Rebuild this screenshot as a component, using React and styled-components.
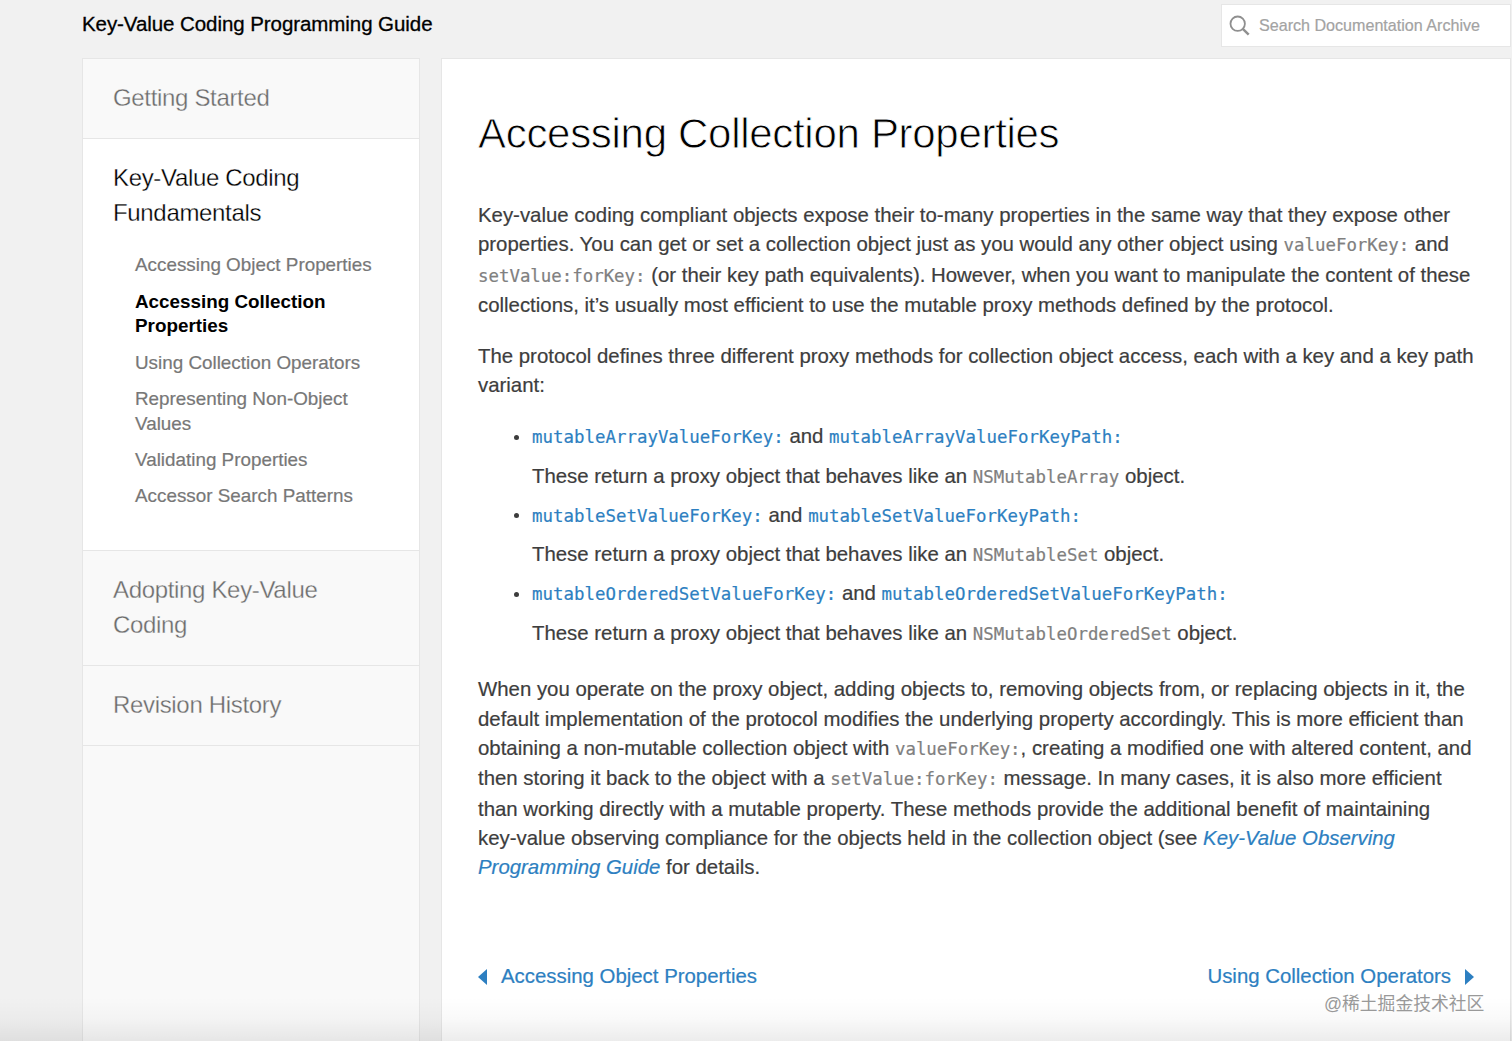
import React from 'react';
import styled, { createGlobalStyle } from 'styled-components';

const GlobalStyle = createGlobalStyle`
  * {
    box-sizing: border-box;
  }

  body {
    margin: 0;
    background: #f1f1f1;
    font-family: 'Liberation Sans', Arial, sans-serif;
    overflow: hidden;
  }

  ul {
    list-style: none;
    margin: 0;
    padding: 0;
  }

  a {
    color: inherit;
    text-decoration: none;
  }
`;

const Page = styled.div`
  display: flex;
  flex-direction: column;
  height: 1041px;
  padding: 0 1px 0 82px;
`;

const TopBar = styled.header`
  display: flex;
  flex: none;
  justify-content: space-between;
  height: 58px;
`;

const GuideTitle = styled.div`
  padding-top: 12px;
  font-size: 20.5px;
  line-height: 24px;
  letter-spacing: -0.07px;
  color: #000;
  white-space: nowrap;
  -webkit-text-stroke: 0.3px currentColor;
`;

const SearchBox = styled.label`
  display: flex;
  align-items: center;
  width: 290px;
  height: 43px;
  margin-top: 4px;
  padding-left: 7px;
  border: 1px solid #e6e6e6;
  background: #fff;

  input {
    width: 240px;
    margin-left: 9px;
    padding: 0 0 2px;
    border: 0;
    outline: 0;
    font: 16.1px/20px 'Liberation Sans', Arial, sans-serif;
    background: none;
    -webkit-text-stroke: 0.2px #a3a3a3;
  }

  input::placeholder {
    color: #a3a3a3;
    opacity: 1;
  }
`;

const Columns = styled.div`
  display: flex;
  flex: 1;
  gap: 21px;
  min-height: 0;
`;

const Sidebar = styled.nav`
  flex: none;
  width: 338px;
  border: 1px solid #e6e6e6;
  border-bottom: 0;
  background: #f9f9f9;
`;

const Chapter = styled.div`
  padding: 21px 30px ${(p) => (p.$active ? '34.6px' : '23px')};
  border-bottom: 1px solid #e6e6e6;
  background: ${(p) => (p.$active ? '#fff' : '#f9f9f9')};
`;

const ChapterTitle = styled.div`
  font-size: 24px;
  line-height: 35px;
  letter-spacing: -0.33px;
  color: ${(p) => (p.$active ? '#000' : '#6c6c6c')};
  -webkit-text-stroke: 0.3px ${(p) => (p.$active ? '#fff' : '#f9f9f9')};
`;

const Sections = styled.ul`
  display: flex;
  flex-direction: column;
  gap: 11.6px;
  padding: 23.4px 0 6px 22px;
`;

const Section = styled.li`
  font-size: 18.85px;
  line-height: 24.7px;
  font-weight: ${(p) => (p.$current ? 'bold' : 'normal')};
  color: ${(p) => (p.$current ? '#000' : '#777')};
  -webkit-text-stroke: ${(p) => (p.$current ? 0 : '0.2px')} currentColor;
`;

const Article = styled.main`
  flex: 1;
  padding: 45px 36px 0;
  border: 1px solid #e6e6e6;
  border-bottom: 0;
  background: #fff;
  color: #3d3d3d;
  font-size: 20.4px;
  line-height: 29.25px;
  letter-spacing: -0.004px;
  -webkit-text-stroke: 0.2px currentColor;
`;

const Title = styled.h1`
  margin: 0 0 37px;
  font-size: 42px;
  font-weight: normal;
  line-height: 60px;
  letter-spacing: -0.3px;
  color: #000;
  -webkit-text-stroke: 0.8px #fff;
`;

const Paragraph = styled.p`
  margin: 0 0 21.8px;
`;

const Line = styled.span`
  display: block;
  white-space: nowrap;
  padding-bottom: ${(p) => (p.$tall ? '1.2px' : 0)};
`;

const Code = styled.code`
  font-family: 'DejaVu Sans Mono', monospace;
  font-size: 17.4px;
  line-height: 1;
  letter-spacing: ${(p) => (p.$link ? '0.02px' : 0)};
  color: ${(p) => (p.$link ? '#2d7fc1' : '#808080')};
`;

const Methods = styled.ul`
  margin: 0 0 27.5px;
  padding-left: 54px;
`;

const Method = styled.li`
  margin-bottom: 10px;
`;

const Names = styled.div`
  display: flex;
  align-items: baseline;
  height: 29.25px;
  margin-bottom: 10px;
  white-space: pre;

  &::before {
    content: '';
    align-self: center;
    width: 5px;
    height: 5px;
    margin: 0 13px 0 -18px;
    border-radius: 50%;
    background: #3d3d3d;
  }
`;

const GuideLink = styled.a`
  font-style: italic;
  color: #2d7fc1;
`;

const Pager = styled.div`
  display: flex;
  justify-content: space-between;
  margin-top: 79.4px;
  color: #2d7fc1;
`;

const PageLink = styled.a`
  display: flex;
  align-items: center;
  gap: 14px;
`;

const BottomFade = styled.div`
  position: absolute;
  left: 0;
  right: 0;
  top: 997px;
  height: 44px;
  background: linear-gradient(rgba(0, 0, 0, 0), rgba(0, 0, 0, 0.025) 50%, rgba(0, 0, 0, 0.075));
  pointer-events: none;
`;

const Watermark = styled.div`
  position: absolute;
  left: 1324px;
  top: 991px;
  font: 17.8px/26px 'Liberation Sans', 'Noto Sans CJK SC', sans-serif;
  color: #999;
  white-space: nowrap;
`;

const chapters = [
  { title: 'Getting Started' },
  {
    title: 'Key-Value Coding Fundamentals',
    sections: [
      'Accessing Object Properties',
      'Accessing Collection Properties',
      'Using Collection Operators',
      'Representing Non-Object Values',
      'Validating Properties',
      'Accessor Search Patterns',
    ],
  },
  { title: 'Adopting Key-Value Coding' },
  { title: 'Revision History' },
];

const methods = [
  ['mutableArrayValueForKey:', 'mutableArrayValueForKeyPath:', 'NSMutableArray'],
  ['mutableSetValueForKey:', 'mutableSetValueForKeyPath:', 'NSMutableSet'],
  ['mutableOrderedSetValueForKey:', 'mutableOrderedSetValueForKeyPath:', 'NSMutableOrderedSet'],
];

const SearchIcon = () => (
  <svg width="21" height="21" viewBox="0 0 21 21" fill="none" stroke="#8f8f8f">
    <circle cx="8.7" cy="8.7" r="7.2" strokeWidth="1.8" />
    <path d="M13.8 13.8L19.7 19.7" strokeWidth="2.4" />
  </svg>
);

const Arrow = ({ left }) => (
  <svg width="9" height="16" viewBox="0 0 9 16" fill="#2d7fc1">
    <path d={left ? 'M9 0V16L0 8Z' : 'M0 0V16L9 8Z'} />
  </svg>
);

const App = () => {
  return (
    <>
      <GlobalStyle />
      <Page>
        <TopBar>
          <GuideTitle>Key-Value Coding Programming Guide</GuideTitle>
          <SearchBox>
            <SearchIcon />
            <input placeholder="Search Documentation Archive" />
          </SearchBox>
        </TopBar>
        <Columns>
          <Sidebar>
            {chapters.map(({ title, sections }) => (
              <Chapter key={title} $active={!!sections}>
                <ChapterTitle $active={!!sections}>{title}</ChapterTitle>
                {sections && (
                  <Sections>
                    {sections.map((name) => (
                      <Section key={name} $current={name === 'Accessing Collection Properties'}>
                        <a href="#">{name}</a>
                      </Section>
                    ))}
                  </Sections>
                )}
              </Chapter>
            ))}
          </Sidebar>
          <Article>
            <Title>Accessing Collection Properties</Title>
            <Paragraph>
              <Line>Key-value coding compliant objects expose their to-many properties in the same way that they expose other</Line>
              <Line $tall>properties. You can get or set a collection object just as you would any other object using <Code>valueForKey:</Code> and</Line>
              <Line $tall><Code>setValue:forKey:</Code> (or their key path equivalents). However, when you want to manipulate the content of these</Line>
              <Line>collections, it’s usually most efficient to use the mutable proxy methods defined by the protocol.</Line>
            </Paragraph>
            <Paragraph>
              <Line>The protocol defines three different proxy methods for collection object access, each with a key and a key path</Line>
              <Line>variant:</Line>
            </Paragraph>
            <Methods>
              {methods.map(([byKey, byPath, type]) => (
                <Method key={type}>
                  <Names>
                    <Code $link>{byKey}</Code> and <Code $link>{byPath}</Code>
                  </Names>
                  <Line>These return a proxy object that behaves like an <Code>{type}</Code> object.</Line>
                </Method>
              ))}
            </Methods>
            <Paragraph>
              <Line>When you operate on the proxy object, adding objects to, removing objects from, or replacing objects in it, the</Line>
              <Line>default implementation of the protocol modifies the underlying property accordingly. This is more efficient than</Line>
              <Line $tall>obtaining a non-mutable collection object with <Code>valueForKey:</Code>, creating a modified one with altered content, and</Line>
              <Line $tall>then storing it back to the object with a <Code>setValue:forKey:</Code> message. In many cases, it is also more efficient</Line>
              <Line>than working directly with a mutable property. These methods provide the additional benefit of maintaining</Line>
              <Line>key-value observing compliance for the objects held in the collection object (see <GuideLink href="#">Key-Value Observing</GuideLink></Line>
              <Line><GuideLink href="#">Programming Guide</GuideLink> for details.</Line>
            </Paragraph>
            <Pager>
              <PageLink href="#"><Arrow left />Accessing Object Properties</PageLink>
              <PageLink href="#">Using Collection Operators<Arrow /></PageLink>
            </Pager>
          </Article>
        </Columns>
      </Page>
      <BottomFade />
      <Watermark>@稀土掘金技术社区</Watermark>
    </>
  );
};

export default App;
